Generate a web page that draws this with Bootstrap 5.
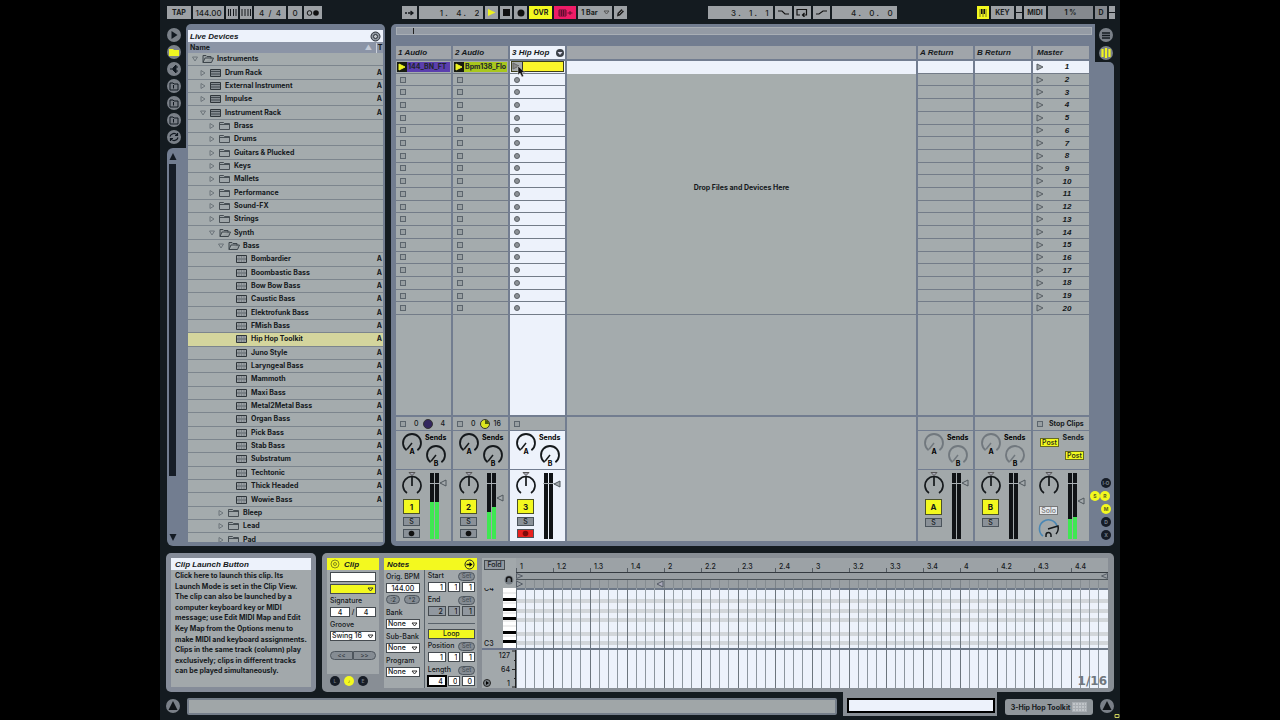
<!DOCTYPE html>
<html lang="en">
<head>
<meta charset="utf-8">
<meta name="viewport" content="width=device-width, initial-scale=1">
<title>Live Set</title>
<link href="https://cdn.jsdelivr.net/npm/bootstrap@5.3.0/dist/css/bootstrap.min.css" rel="stylesheet">
<style>
:root{--dark:#141b20;--panel:#727d90;--cell:#a4abad;--hdr:#a0a5aa;--lite:#edf2fb;--yel:#f3f91f;--line:#7c858d;--ink:#15191c}
body{background:#000;font:700 7px/10px Inter,"Liberation Sans",sans-serif;color:var(--ink)}
.live{width:75%;background:var(--dark);min-height:100vh;overflow:hidden}
button,input,select{font:inherit;color:inherit;border:0;border-radius:0;padding:0;margin:0;min-width:0}
button{line-height:1;display:inline-flex;align-items:center;justify-content:center}
svg{display:block;flex:none}
.ttl{font:italic 700 8px/13px "Liberation Sans",Arial,sans-serif;white-space:nowrap}
/* transport */
.transport{height:24px;padding:6px 5px 5px 7px;font-size:8px;font-weight:500}
.grp{column-gap:2px}
.tb{height:13px;background:#9da1a5;color:#1a1d20;text-align:center}
.tb.bold{font-weight:700;font-size:7px}
.quant{appearance:none;text-align:left;padding-left:3px;background:#9da1a5 url("data:image/svg+xml,%3Csvg xmlns='http://www.w3.org/2000/svg' width='7' height='5'%3E%3Cpath d='M1 1h5L3.5 4z' fill='none' stroke='%23555'/%3E%3C/svg%3E") no-repeat right 2px center}
.meterbox{line-height:13px;background:#85898e}
.on{background:var(--yel)!important}
.mini{width:6px;height:13px;background:linear-gradient(#9da1a5 6px,#14181c 6px 7px,#9da1a5 7px)}
/* side rail */
.middle{height:522px;padding:0 6px 0 7px}
.rail{width:19px}
.tools{gap:3px}
.rnd{width:14px;height:14px;border-radius:50%;background:#7a8088;color:#14191e}
.scroller{background:var(--panel);border-radius:6px 0 0 6px;width:19px;height:398px}
.track-bar{width:7px;height:312px;background:#161d27}
/* browser */
.browser{width:199px;background:var(--panel);border-radius:5px 5px 5px 0;padding:6px 2px 5px 2px}
.files{height:489px;overflow:hidden;background:var(--cell)}
.files ul{height:494px}
.files li{flex:1 1 0;border-bottom:1px solid var(--line);padding-right:1px}
.files li.sel{background:#d4d59d}
.ind0{padding-left:4px}.ind1{padding-left:12px}.ind2{padding-left:21px}.ind3{padding-left:30px}.ind4{padding-left:48px}
/* session */
.session{background:var(--panel);border-radius:5px 0 0 5px;padding:3px 3px 5px 5px;margin-left:6px}
.over{height:8px;background:#949ba5;border:1px solid #a8aeb5;margin:0 0 11px}
.set{display:grid;grid-template-columns:55px 55px 55px 1fr 55px 56px 56px;column-gap:2px;margin-right:3px}
.set>div{min-width:0}
.head{height:13px;background:var(--hdr);margin-bottom:2px;padding-left:2px}
.slots{height:254px;background:var(--cell)}
.slot{flex:1 1 0;border-bottom:1px solid #737c88;padding-left:4px;min-height:0}
.slot.clipped{padding:0 1px}
.hi{background:var(--lite)!important}
.rest{height:100px;background:var(--cell);margin-bottom:2px}
.stat{height:13px;background:#a2a8aa;margin-bottom:1px;padding-left:4px;font-weight:500}
.sends{height:38px;background:#a2a8aa;margin-bottom:1px}
.mix{height:71px;background:#a2a8aa;padding:2px 0 0 5px}
.sq{width:6px;height:6px;border:1px solid #5c656d;background:#989fa2;flex:none}
.dot{width:6px;height:6px;border-radius:50%;border:1px solid #5c6167;background:#8c9196;flex:none}
.num{width:17px;height:16px;border:1px solid #4b5128;font-size:8px;margin:0 0 3px 2px}
.sb{width:17px;height:9px;background:#8a9198;border:1px solid #4b545c;font-weight:500;margin:0 0 3px 2px}
.post{height:9px;width:19px;border:1px solid #666b20;font-weight:500}
.clipname{overflow:hidden;white-space:nowrap;height:10px;line-height:10px}
.tiny{width:10px;height:10px;border-radius:50%;font-size:5px;background:#161c26;color:#77808c}
.tiny.on{color:#5a5e20}
.sections{background:var(--panel);border-radius:0 5px 5px 0;padding:0 0 6px 3px;gap:3px}
/* details */
.lower{height:139px;margin:7px 6px 0;gap:6px}
.box{background:#858c99;border-radius:5px;padding:5px}
.body{background:#a2a8ab}
.info{width:150px}
.info p{height:107px;padding:1px 0 0 4px;margin:0}
.info p span{flex:1 1 0;white-space:nowrap}
.detail{background:#888e95;border-radius:5px;padding:5px 6px 4px 5px;font-weight:500}
.yh{background:var(--yel);height:12px;padding:0 2px 0 3px}
.fld{background:#fff;border:1px solid #454b50;height:10px;width:100%;text-align:right;padding:0 2px;font-weight:500;line-height:8px}
.fld.mid{text-align:center}
.fld.off{background:#9198a0}
.fld.thick{outline:1px solid #000;border-color:#000}
select.fld{appearance:none;text-align:left;padding:0 8px 0 1px;background:#fff url("data:image/svg+xml,%3Csvg xmlns='http://www.w3.org/2000/svg' width='7' height='5'%3E%3Cpath d='M1 1h5L3.5 4z' fill='none' stroke='%23333'/%3E%3C/svg%3E") no-repeat right 1px center}
select.fld.y{background-color:var(--yel)}
.r12{display:flex;height:12px;line-height:12px;white-space:nowrap}
.pill{background:#858c93;border:1px solid #4e565e;border-radius:6px;height:9px;color:#2c3338;font-weight:500;font-size:6px}
.pill.set-here{width:17px;color:#4a5157}
.roll{background:var(--lite)}
.ruler{height:15px;background:#9ca2a6;border-bottom:1px solid #343a40}
.ruler span{flex:1 1 0;border-left:1px solid #555c63;height:4px;min-width:0}
.ruler i{display:block;font-style:normal;font-weight:500;margin:-5px 0 0 3px;line-height:8px}
.keys{width:34px;margin-left:5px}
.res{font:700 12px/14px "DejaVu Sans",sans-serif;color:#70777d;padding-right:1px}
.foot{height:28px;padding:0 6px}
.foot .rnd{margin-top:7px}
.status{height:17px;background:#a0a6a8;border:2px solid #757e8a;border-radius:2px;margin:6px 6px 0 7px}
.tabon{background:#888e95;width:154px;height:24px;padding:6px 2px 3px 4px}
.tabon input{height:15px;border:2px solid #000;background:var(--lite);width:100%;display:block}
.dev{background:#90969b;height:16px;width:88px;border-radius:3px;margin:7px 7px 0 8px;gap:2px}
</style>
</head>
<body>
<main class="live mx-auto d-flex flex-column">

<div class="transport d-flex justify-content-between">
 <div class="d-flex grp">
  <button class="tb bold" style="width:24px">TAP</button>
  <input class="tb" style="width:31px" value="144.00" aria-label="Tempo">
  <button class="tb" style="width:12px" aria-label="Nudge down"><svg width="10" height="9"><path d="M1.500 1v7M3.500 1v7M6.500 1v7M9 1v7" stroke="#14181c"/></svg></button>
  <button class="tb" style="width:12px" aria-label="Nudge up"><svg width="10" height="9"><path d="M1 1v7M4 1v7M7 1v7M9.500 1v7" stroke="#14181c"/></svg></button>
  <input class="tb" style="width:32px" value="4  /  4" aria-label="Time signature">
  <input class="tb" style="width:14px" value="0" aria-label="Groove amount">
  <button class="tb" style="width:18px" aria-label="Metronome"><svg width="14" height="8"><circle cx="3.500" cy="4" r="2.300" fill="none" stroke="#111"/><circle cx="10" cy="4" r="2.800" fill="#111"/></svg></button>
 </div>
 <div class="d-flex grp">
  <button class="tb" style="width:15px" aria-label="Follow"><svg width="11" height="8"><path d="M1 4h2M4 4h5M6.500 2L9 4 6.500 6" fill="none" stroke="#14181c" stroke-width="1.300"/></svg></button>
  <input class="tb text-end pe-1" style="width:64px" value="1 .    4 .    2" aria-label="Position">
  <button class="tb" style="width:13px" aria-label="Play"><svg width="9" height="9"><path d="M1 1l7.500 3.500L1 8z" fill="#eef21e"/></svg></button>
  <button class="tb" style="width:12px" aria-label="Stop"><svg width="7" height="7"><path d="M0 0h7v7H0z" fill="#111"/></svg></button>
  <button class="tb" style="width:13px" aria-label="Record"><svg width="8" height="8"><circle cx="4" cy="4" r="3.500" fill="#111"/></svg></button>
  <button class="tb bold on" style="width:23px">OVR</button>
  <button class="tb" style="width:22px;background:#ee1c67" aria-label="Session record"><svg width="15" height="8"><path d="M1 1h7v6H1zM1 3h7M1 5h7M3.500 1v6M5.500 1v6M9.500 4h5M12 2v4" fill="none" stroke="#5e0d30"/></svg></button>
  <select class="tb bold quant" style="width:34px" aria-label="Quantization"><option>1 Bar</option></select>
  <button class="tb" style="width:13px" aria-label="Draw"><svg width="9" height="9"><path d="M1 8.500l.5-3.500L5.500 1 8 3.500 4 7.500z" fill="#222"/><path d="M3 6l3.500-3.500" stroke="#aaa" stroke-width=".7"/></svg></button>
 </div>
 <div class="d-flex grp">
  <input class="tb text-end pe-1" style="width:65px" value="3 .    1 .    1" aria-label="Loop start">
  <button class="tb" style="width:17px" aria-label="Punch in"><svg width="13" height="7"><path d="M1 2h4l3 3h4" fill="none" stroke="#111" stroke-width="1.200"/></svg></button>
  <button class="tb" style="width:17px" aria-label="Loop"><svg width="12" height="9"><path d="M4 7H1V1.500h9.500V7H7M8.500 5L6.500 7l2 2" fill="none" stroke="#111" stroke-width="1.200"/></svg></button>
  <button class="tb" style="width:17px" aria-label="Punch out"><svg width="13" height="7"><path d="M1 5h3l4-3h4" fill="none" stroke="#111" stroke-width="1.200"/></svg></button>
  <input class="tb text-end pe-1" style="width:65px" value="4 .    0 .    0" aria-label="Loop length">
 </div>
 <div class="d-flex grp">
  <button class="tb on" style="width:12px" aria-label="Computer keyboard"><svg width="8" height="8"><path d="M1 0v8M7 0v8M4 5v3" stroke="#777a20"/><path d="M2.800 0v5M5.200 0v5" stroke="#111" stroke-width="1.600"/></svg></button>
  <button class="tb bold" style="width:23px">KEY</button><span class="mini"></span>
  <button class="tb bold" style="width:22px">MIDI</button>
  <span class="tb bold meterbox" style="width:45px">1 %</span>
  <span class="tb bold meterbox" style="width:12px">D</span><span class="mini"></span>
 </div>
</div>

<div class="middle d-flex">
 <div class="rail d-flex flex-column">
  <div class="d-flex flex-column pt-1 tools" id="tools"></div>
  <div class="scroller mt-auto d-flex flex-column align-items-center">
   <svg class="mt-1 me-2" width="8" height="8"><path d="M4 1l3.500 7h-7z" fill="#141b24"/></svg>
   <div class="track-bar mt-1 me-2"></div>
   <svg class="mt-auto mb-1 me-2" width="8" height="8"><path d="M4 7L.5 0h7z" fill="#141b24"/></svg>
  </div>
 </div>
 <section class="browser">
  <div class="d-flex justify-content-between align-items-center ttl hi" style="height:12px;padding:0 2px">Live Devices
   <svg width="11" height="11"><circle cx="5.500" cy="5.500" r="4.500" fill="#8e959f" stroke="#2a3038"/><circle cx="5.500" cy="5.500" r="2" fill="#c3c8ce" stroke="#2a3038"/></svg></div>
  <div class="d-flex align-items-center" style="height:11px;background:#8b94a6;padding-left:2px"><span class="me-auto">Name</span><span style="color:#c3cad6;padding-right:4px">▲</span><span class="text-center" style="border-left:1px solid #ccd2da;width:7px">T</span></div>
  <div class="files"><ul class="list-unstyled m-0 d-flex flex-column" id="files"></ul></div>
 </section>
 <section class="session flex-fill">
  <div class="over"><div style="width:17px;height:6px;border-right:1px solid #222"></div></div>
  <div class="set" id="set"></div>
 </section>
 <div class="rail d-flex flex-column">
  <div style="height:38px;background:var(--dark);border-radius:0 0 0 5px;padding-left:3px" class="d-flex flex-column align-items-center pt-1">
   <button class="rnd mb-1" aria-label="Arrangement"><svg width="10" height="9"><path d="M1 2h8M1 4.500h8M1 7h8" stroke="#141b20" stroke-width="1.300"/></svg></button>
   <button class="rnd" aria-label="Session"><svg width="12" height="10"><path d="M2.500 1v8M6 0v10M9.500 1v8" stroke="#eff522" stroke-width="2.200"/></svg></button>
  </div>
  <div class="sections flex-fill d-flex flex-column align-items-center justify-content-end">
   <button class="tiny">I·O</button>
   <div class="d-flex align-self-end me-1"><button class="tiny on">S</button><button class="tiny on">R</button></div>
   <button class="tiny on">M</button><button class="tiny">D</button><button class="tiny">X</button>
  </div>
 </div>
</div>

<div class="lower d-flex">
 <aside class="box info">
  <div class="body h-100">
   <div class="hi ttl ps-1" style="height:12px">Clip Launch Button</div>
   <p class="d-flex flex-column"><span>Click here to launch this clip. Its</span><span>Launch Mode is set in the Clip View.</span><span>The clip can also be launched by a</span><span>computer keyboard key or MIDI</span><span>message; use Edit MIDI Map and Edit</span><span>Key Map from the Options menu to</span><span>make MIDI and keyboard assignments.</span><span>Clips in the same track (column) play</span><span>exclusively; clips in different tracks</span><span>can be played simultaneously.</span></p>
  </div>
 </aside>
 <section class="detail flex-fill d-flex">
  <div style="width:52px" class="d-flex flex-column">
   <div class="yh ttl d-flex align-items-center gap-1"><svg width="10" height="10"><circle cx="5" cy="5" r="4" fill="none" stroke="#85891b"/><circle cx="5" cy="5" r="1.500" fill="none" stroke="#85891b"/></svg>Clip</div>
   <div class="body d-flex flex-column" style="padding:2px 3px;height:104px">
    <input class="fld" aria-label="Clip name"><select class="fld y" style="margin-top:2px" aria-label="Clip color"><option></option></select>
    <label class="r12" for="sig" style="margin-top:1px">Signature</label>
    <div class="d-flex align-items-center justify-content-between"><input id="sig" class="fld mid" style="width:20px" value="4">/<input class="fld mid" style="width:20px" value="4" aria-label="Denominator"></div>
    <label class="r12" for="groove" style="margin-top:2px">Groove</label>
    <select id="groove" class="fld"><option>Swing 16</option></select>
    <div class="d-flex" style="margin-top:10px"><button class="pill flex-fill rounded-end-0">&lt;&lt;</button><button class="pill flex-fill rounded-start-0">&gt;&gt;</button></div>
   </div>
   <div class="d-flex" style="gap:4px;margin-top:2px;padding-left:3px">
    <button class="tiny" aria-label="Launch box">L</button><button class="tiny on" aria-label="Sample box">♪</button><button class="tiny" aria-label="Envelopes box">E</button></div>
  </div>
  <div style="width:93px;margin-left:5px">
   <div class="yh ttl d-flex align-items-center justify-content-between">Notes<svg width="11" height="11"><circle cx="5.500" cy="5.500" r="4.500" fill="none" stroke="#222"/><path d="M2.500 5.500h4" stroke="#111" stroke-width="1.500"/><path d="M5.500 3l3 2.500-3 2.500z"/></svg></div>
   <div class="body d-flex" style="height:118px">
    <div style="width:41px;padding:1px 4px 0 2px;border-right:1px solid #59626a">
     <label class="r12" for="bpm">Orig. BPM</label><div class="r12"><input id="bpm" class="fld mid" value="144.00"></div>
     <div class="r12 gap-1"><button class="pill flex-fill">:2</button><button class="pill flex-fill">*2</button></div>
     <label class="r12" for="bank">Bank</label><div class="r12"><select id="bank" class="fld"><option>None</option></select></div>
     <label class="r12" for="sbank">Sub-Bank</label><div class="r12"><select id="sbank" class="fld"><option>None</option></select></div>
     <label class="r12" for="prog">Program</label><div class="r12"><select id="prog" class="fld"><option>None</option></select></div>
    </div>
    <div class="flex-fill" style="padding:0 2px 0 3px" id="ranges"></div>
   </div>
  </div>
  <div class="keys body d-flex flex-column">
   <div style="height:30px;padding:2px"><button class="fld off d-flex" style="width:21px">Fold</button>
    <svg class="ms-auto" width="10" height="10" style="margin-top:5px"><circle cx="5" cy="5" r="4.500" fill="#767d84"/><path d="M2.500 7V4.500a2.500 2.500 0 015 0V7" fill="none" stroke="#111" stroke-width="1.400"/></svg></div>
   <div class="d-flex justify-content-between" style="height:62px;border-bottom:2px solid #6d768c"><div class="d-flex flex-column justify-content-between"><span style="height:6px;line-height:2px;overflow:hidden;padding-left:2px">C4</span><span style="padding-left:2px;line-height:9px">C3</span></div>
    <svg width="13" height="60"><path fill="#fff" d="M0 0h13v60H0z"/><path d="M0 5h13M0 15h13M0 25h13M0 33h13M0 38h13M0 48h13" stroke="#ddd"/><path d="M0 11.500h13M0 21.500h13M0 30.500h13M0 44.500h13M0 53.500h13" stroke="#000" stroke-width="3"/></svg></div>
   <div class="d-flex flex-fill"><button class="align-self-end bg-transparent" aria-label="Preview" style="padding:0 0 1px 1px"><svg width="8" height="8"><circle cx="4" cy="4" r="3.500" fill="#777e84" stroke="#222"/><path d="M3 2l3 2-3 2z"/></svg></button>
    <div class="d-flex flex-column justify-content-between text-end flex-fill" style="padding:1px 2px 0 0;line-height:9px"><span>127</span><span>64</span><span>1</span></div>
    <svg width="4" height="38"><path d="M0 1h4M2 10.500h2M0 19.500h4M2 28.500h2M0 37h4M3.500 0v38" stroke="#222" fill="none"/></svg></div>
  </div>
  <div class="flex-fill d-flex flex-column" style="min-width:0">
   <div class="ruler d-flex align-items-end" id="ruler"></div>
   <div style="height:7px;background:#989ea2;border-bottom:1px solid #4c5358" class="d-flex justify-content-between"><svg width="7" height="6"><path d="M.5.5l6 2.500-6 2.500z" fill="none" stroke="#555c66"/></svg><svg width="7" height="6"><path d="M6.500.5l-6 2.500 6 2.500z" fill="none" stroke="#555c66"/></svg></div>
   <svg id="strip" width="100%" height="8" style="background:#999fa3"></svg>
   <svg id="notes" width="100%" height="62" class="roll"></svg>
   <div class="position-relative flex-fill"><svg id="vel" width="100%" height="38" class="roll"></svg><span class="position-absolute bottom-0 end-0 res">1/16</span></div>
  </div>
 </section>
</div>

<div class="foot d-flex">
 <button class="rnd" aria-label="Show info"><svg width="10" height="10"><path d="M5 0l4.500 9h-9z" fill="#101418"/></svg></button>
 <div class="status flex-fill"></div>
 <div class="tabon"><input aria-label="Clip view selector"></div>
 <button class="dev">3-Hip Hop Toolkit<svg width="15" height="10"><path d="M0 0h15v10H0z" fill="#a9aeb3"/><path d="M1 2h13M1 5h13M1 8h13" stroke="#d9dcdf" stroke-dasharray="2 1"/></svg></button>
 <button class="rnd" aria-label="Show detail"><svg width="10" height="10"><path d="M5 0l4.500 9h-9z" fill="#101418"/></svg></button>
 <svg class="align-self-end" width="6" height="6" style="margin:0 -6px 1px 0"><path d="M1 1.500h4v3H1z" fill="#222" stroke="#c9d05a"/></svg>
</div>
</main>

<script>
const $=id=>document.getElementById(id);
/* browser tool icons */
const ico=['<path d="M2.500 1l6 4-6 4z" fill="#111820"/>','<path d="M0 2h4l1 1h5v6H0z" fill="#eff522"/>','<path d="M1 5h3M4 4l3-3v8L4 6zM7 3h2M7 7h2" stroke="#111820" fill="#111820"/>'];
const folder='<path d="M1 2h3l1 1h4v6H1z" fill="none" stroke="#111820"/><path d="M4.500 4v3.500" stroke="#111820"/>';
$('tools').innerHTML=[...ico,folder,folder,folder,'<path d="M1 4.500a4 4 0 017-1.500M9 5.500a4 4 0 01-7 1.500M8.500 1v2.500H6M1.500 9V6.500H4" fill="none" stroke="#111820" stroke-width="1.200"/>']
 .map(p=>`<button class="rnd" aria-label="Browser"><svg width="10" height="10">${p}</svg></button>`).join('');

/* device tree: level, kind, name */
const tri=o=>`<svg width="6" height="6" class="me-1"><path d="${o?'M.5 1h5L3 5z':'M1 .5v5L5 3z'}" fill="none" stroke="#6d757b"/></svg>`;
const kinds={
 o:'<path d="M1 8.500V1.500h3l1 1h4v2M1 8.500h8.500l2-4.500H3z" fill="#979ea1" stroke="#3d454b"/>',
 f:'<path d="M.5 8.500v-7h4l1 1h5v6zM.5 3.500h10" fill="#9fa6a9" stroke="#3d454b" stroke-width=".9"/>',
 r:'<path d="M.5 1.500h10v7H.5z" fill="#858c91" stroke="#2f363b"/><path d="M1 3.500h9M1 6h9" stroke="#41494f"/>',
 p:'<path d="M.5 1.500h10v7H.5z" fill="#9ba1a5" stroke="#2f363b"/><path d="M1 5h9" stroke="#5b6369"/><path d="M5.500 2v6M3 2v6M8 2v6" stroke="#747c82" stroke-width=".8"/>'};
const tree=[[0,'o','Instruments'],...['Drum Rack','External Instrument','Impulse','Instrument Rack'].map(n=>[1,'r',n]),
 ...['Brass','Drums','Guitars & Plucked','Keys','Mallets','Performance','Sound-FX','Strings'].map(n=>[2,'f',n]),
 [2,'o','Synth'],[3,'o','Bass'],
 ...['Bombardier','Boombastic Bass','Bow Bow Bass','Caustic Bass','Elektrofunk Bass','FMish Bass','Hip Hop Toolkit','Juno Style','Laryngeal Bass','Mammoth','Maxi Bass','Metal2Metal Bass','Organ Bass','Pick Bass','Stab Bass','Substratum','Techtonic','Thick Headed','Wowie Bass'].map(n=>[4,'p',n]),
 ...['Bleep','Lead','Pad'].map(n=>[3,'f',n])];
$('files').innerHTML=tree.map(([l,k,n])=>`<li class="d-flex align-items-center ind${l} ${n=='Hip Hop Toolkit'?'sel':''}">${k=='p'?'':tri(k=='o'||n=='Instrument Rack')}<svg width="12" height="10" style="margin-right:3px">${kinds[k]}</svg><span class="me-auto">${n.replace('&','&amp;')}</span>${k=='r'||k=='p'?'<span>A</span>':''}</li>`).join('');

/* mixer parts */
const knob=(x,y,r,c,t)=>`<g stroke="${c}" stroke-width="1.800" fill="none"><path d="M${x-r*.6} ${y+r*.8}A${r} ${r} 0 1 1 ${x+r*.6} ${y+r*.8}"/><path d="M${x-r*.55} ${y+r*.7}L${x} ${y}" stroke-width="1.500"/></g><text x="${x}" y="${y+11}" text-anchor="middle" font-size="7">${t}</text>`;
const sends=c=>`<svg width="55" height="38">${knob(16,12,9,c,'A')}${knob(40,24,9,c,'B')}<text x="29" y="9" font-size="7">Sends</text></svg>`;
const pan=`<svg width="21" height="25" style="margin-bottom:2px"><path d="M8 .5h6l-3 3z" fill="#aab" stroke="#555"/><path d="M6 21A9 9 0 1 1 16 21M11 5v9" fill="none" stroke="#15191c" stroke-width="1.700"/></svg>`;
const meter=(a,b,v)=>`<svg width="24" height="68" style="margin-left:5px"><path d="M3 1h4v66H3zM8 1h4v66H8z" fill="#101316"/>${a?`<path d="M3 ${a}h4V67H3zM8 ${b}h4V67H8z" fill="#3fe852"/>`:''}<path d="M2 11.500h11" stroke="#aab0b4"/><path d="M19 ${v-3}v6l-6-3z" fill="#a3a9ac" stroke="#4e565c"/></svg>`;
const strip=(n,a,b,v,rec)=>`<div class="d-flex mix ${n==3?'hi':''}"><div class="d-flex flex-column" style="width:21px">${pan}<button class="num on">${n}</button><button class="sb">S</button>${rec===undefined?'':`<button class="sb" aria-label="Arm" ${rec?'style="background:#e8201e"':''}><svg width="7" height="7"><circle cx="3.500" cy="3.500" r="2.800" fill="${rec?'#7c0a0a':'#111'}"/></svg></button>`}</div>${meter(a,b,v)}</div>`;
const play=(f,s)=>`<svg width="8" height="8"><path d="M1 1l6 3-6 3z" fill="${f}" stroke="${s}"/></svg>`;
const rep=(n,f)=>Array.from({length:n},(_,i)=>f(i)).join('');
const clip=(n,c)=>`<button class="w-100 justify-content-start clipname" style="background:${c}"><span style="background:#171b10;padding:1px">${play('#eff522','#eff522')}</span><span style="padding-left:1px;color:#20242c">${n}</span></button>`;
const pie=(c,d)=>`<svg width="10" height="10"><circle cx="5" cy="5" r="4.500" fill="${c}" stroke="#333"/><path d="${d}" fill="#4d5b10"/></svg>`;
const audio=(n,t,first,st,a,b,v)=>`<div><div class="head ttl">${t}</div><div class="slots d-flex flex-column">${rep(20,i=>`<div class="slot d-flex align-items-center ${i?'':'clipped'}">${i?'<span class="sq"></span>':first}</div>`)}</div><div class="rest"></div><div class="stat d-flex align-items-center"><span class="sq" style="margin-right:8px"></span>${st}</div><div class="sends">${sends('#15191c')}</div>${strip(n,a,b,v,false)}</div>`;
const ret=n=>`<div><div class="head ttl">${n} Return</div><div class="slots d-flex flex-column">${rep(20,i=>`<div class="slot ${i?'':'hi'}"></div>`)}</div><div class="rest"></div><div class="stat"></div><div class="sends">${sends('#71787e')}</div>${strip(n,0,0,11)}</div>`;
const cursor='<svg class="position-absolute" style="left:7px;top:5px;z-index:2" width="9" height="11"><path d="M1 0v9l2-2 2 4 1.500-1L5 6.500h3z" fill="#111" stroke="#ddd" stroke-width=".5"/></svg>';
$('set').innerHTML=
 audio(1,'1 Audio',clip('144_BN_FT','#5b3fae'),'<span>0</span><span class="mx-1">'+pie('#33265e','M5 5')+'</span><span class="ms-1">4</span>',30,30,11)+
 audio(2,'2 Audio',clip('Bpm138_Flo','#a9c71d'),'<span>0</span><span class="mx-1">'+pie('#dbe51f','M5 5V1A4 4 0 019 5z')+'</span><span>16</span>',40,35,26)+
 `<div><div class="head ttl hi d-flex align-items-center justify-content-between">3 Hip Hop<svg width="10" height="10"><circle cx="5" cy="5" r="4" fill="#3b4148"/><path d="M2.500 4h5L5 7z" fill="#dde"/></svg></div>
 <div class="slots hi d-flex flex-column">${rep(20,i=>i?'<div class="slot d-flex align-items-center"><span class="dot"></span></div>':`<div class="slot d-flex align-items-center clipped position-relative"><button class="w-100 justify-content-start" style="height:11px;background:#fbf52a;border:1px solid #3d3e1a" aria-label="Launch clip"><span style="background:#a6aaad;height:9px;width:11px;border-right:1px solid #333">${play('#888','#666')}</span></button>${cursor}</div>`)}</div>
 <div class="rest hi"></div><div class="stat d-flex align-items-center"><span class="sq"></span></div><div class="sends hi">${sends('#15191c')}</div>${strip(3,0,0,12,true)}</div>`+
 `<div class="d-flex flex-column"><div class="head"></div><div class="hi" style="height:13px"></div><div class="text-center" style="height:241px;background:#a6adad;border-bottom:1px solid #737c88;padding-top:109px">Drop Files and Devices Here</div><div class="rest"></div><div class="flex-fill" style="background:#a6acae"></div></div>`+
 ret('A')+ret('B')+
 `<div><div class="head ttl ps-1">Master</div><div class="slots d-flex flex-column">${rep(20,i=>`<div class="slot d-flex align-items-center ttl ${i?'':'hi'}" style="padding-left:3px">${play('#9aa0a3','#575e64')}<span class="flex-fill text-center" style="padding-left:1px">${i+1}</span></div>`)}</div><div class="rest"></div><div class="stat d-flex align-items-center fw-bold"><span class="sq" style="margin-right:6px"></span>Stop Clips</div>
 <div class="sends d-flex flex-column" style="padding:2px 5px 0 7px"><div class="d-flex justify-content-between"><button class="on post" style="margin-top:5px">Post</button>Sends</div><button class="on post align-self-end mt-1">Post</button></div>
 <div class="mix d-flex"><div style="width:22px">${pan}<button style="height:9px;width:19px;border:1px solid #777;background:#e6e9ed;color:#777;font-weight:500;margin:7px 0 3px 1px">Solo</button><svg width="22" height="22"><path d="M5 18A9 9 0 1 1 19 8" fill="none" stroke="#4a87b4" stroke-width="1.600"/><path d="M10 11l10-3a9 9 0 01-2 8" fill="none" stroke="#15191c" stroke-width="1.500"/><path d="M8 19v-2a2.500 2.500 0 015 0v2" fill="none" stroke="#15191c" stroke-width="1.500"/></svg></div>${meter(47,45,29)}</div></div>`;

/* clip ranges */
const three=(v,c='',f='')=>`<div class="r12" style="gap:2px"><input class="fld ${c} ${f}" value="${v[0]}" aria-label="Bar"><input class="fld ${c}" style="width:60%" value="${v[1]}" aria-label="Beat"><input class="fld ${c}" style="width:60%" value="${v[2]}" aria-label="Sixteenth"></div>`;
const cap=t=>`<div class="r12 justify-content-between align-items-center"><span>${t}</span><button class="pill set-here">Set</button></div>`;
$('ranges').innerHTML=cap('Start')+three('111')+cap('End')+three('211','off')+'<hr class="m-0 opacity-100" style="border-color:#59626a;padding-bottom:5px;transform:none;margin-top:5px!important"><button class="fld on mid d-flex" style="margin-bottom:1px">Loop</button>'+cap('Position')+three('111')+cap('Length')+three('400','','thick');

/* timeline */
$('ruler').innerHTML=rep(16,i=>`<span><i>${(i>>2)+1}${i%4?'.'+(i%4+1):''}</i></span>`);
const grid=(h,a,b)=>rep(65,i=>`<line x1="${i/64*100}%" x2="${i/64*100}%" y1="0" y2="${h}" stroke="${i%4?a:b}" shape-rendering="crispEdges"/>`);
$('strip').innerHTML=grid(8,'#858c91','#7b8288')+'<svg x="25%" overflow="visible"><path d="M-7 4l6-3v6z" fill="#aab" stroke="#555c66"/></svg><path d="M.5 1l6 3-6 3z" fill="none" stroke="#555c66"/>';
$('notes').innerHTML='<rect width="100%" height="2" fill="#6d7887"/>'+[11,21,30,44,53].map(y=>`<rect y="${y}" width="100%" height="4" fill="#d2d6da"/>`).join('')+grid(62,'#98a1a8','#6c757d')+'<rect y="60" width="100%" height="2" fill="#6d7887"/>';
$('vel').innerHTML=grid(38,'#8c959d','#6c757d');
</script>
<script src="https://cdn.jsdelivr.net/npm/bootstrap@5.3.0/dist/js/bootstrap.bundle.min.js"></script>
</body>
</html>
